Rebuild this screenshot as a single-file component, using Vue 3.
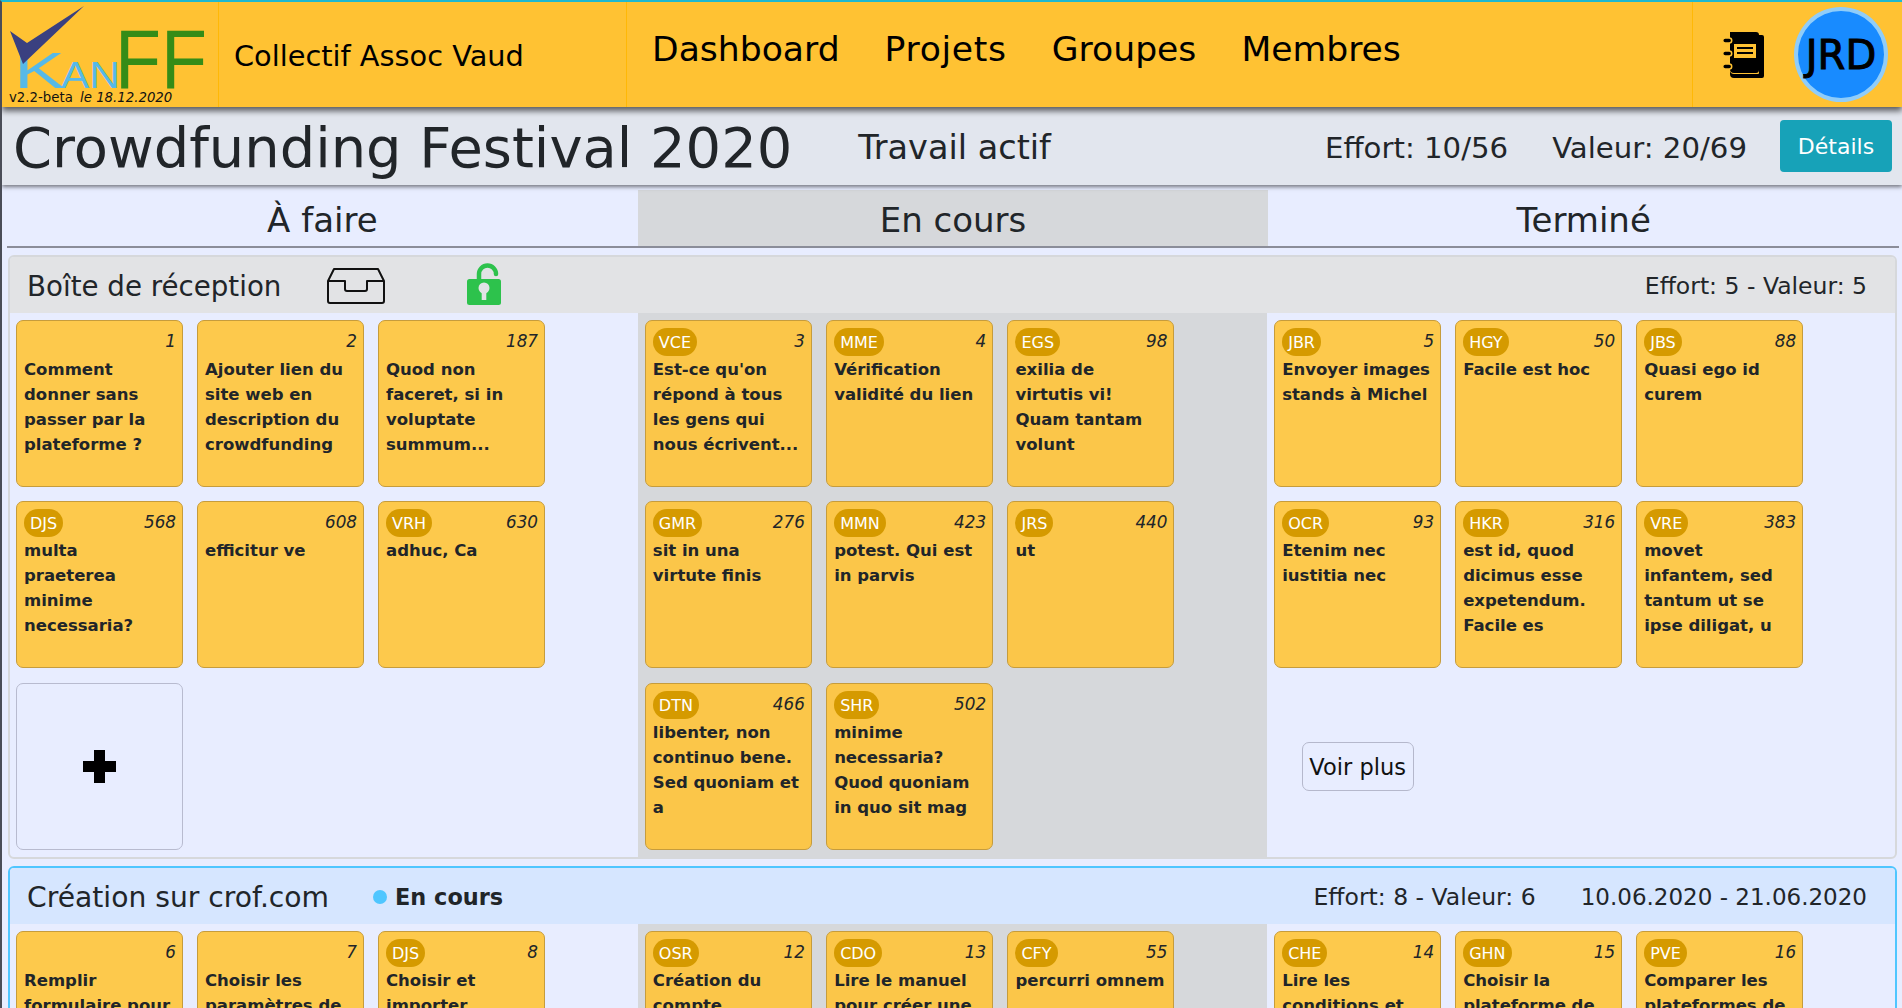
<script setup>
const sections = [
  {
    title: 'Boîte de réception', kind: 'is-inbox', stats: 'Effort: 5 - Valeur: 5',
    cols: [
      { cards: [
        { n: 1, t: 'Comment donner sans passer par la plateforme ?' },
        { n: 2, t: 'Ajouter lien du site web en description du crowdfunding' },
        { n: 187, t: 'Quod non faceret, si in voluptate summum...' },
        { b: 'DJS', n: 568, t: 'multa praeterea minime necessaria?' },
        { n: 608, t: 'efficitur ve' },
        { b: 'VRH', n: 630, t: 'adhuc, Ca' }
      ], add: true },
      { cards: [
        { b: 'VCE', n: 3, t: "Est-ce qu'on répond à tous les gens qui nous écrivent..." },
        { b: 'MME', n: 4, t: 'Vérification validité du lien' },
        { b: 'EGS', n: 98, t: 'exilia de virtutis vi! Quam tantam volunt' },
        { b: 'GMR', n: 276, t: 'sit in una virtute finis' },
        { b: 'MMN', n: 423, t: 'potest. Qui est in parvis' },
        { b: 'JRS', n: 440, t: 'ut' },
        { b: 'DTN', n: 466, t: 'libenter, non continuo bene. Sed quoniam et a' },
        { b: 'SHR', n: 502, t: 'minime necessaria? Quod quoniam in quo sit mag' }
      ] },
      { cards: [
        { b: 'JBR', n: 5, t: 'Envoyer images stands à Michel' },
        { b: 'HGY', n: 50, t: 'Facile est hoc' },
        { b: 'JBS', n: 88, t: 'Quasi ego id curem' },
        { b: 'OCR', n: 93, t: 'Etenim nec iustitia nec' },
        { b: 'HKR', n: 316, t: 'est id, quod dicimus esse expetendum. Facile es' },
        { b: 'VRE', n: 383, t: 'movet infantem, sed tantum ut se ipse diligat, u' }
      ], more: true }
    ]
  },
  {
    title: 'Création sur crof.com', kind: 'is-active', stats: 'Effort: 8 - Valeur: 6', dates: '10.06.2020 - 21.06.2020',
    cols: [
      { cards: [
        { n: 6, t: 'Remplir formulaire pour' },
        { n: 7, t: 'Choisir les paramètres de' },
        { b: 'DJS', n: 8, t: 'Choisir et importer' }
      ] },
      { cards: [
        { b: 'OSR', n: 12, t: 'Création du compte' },
        { b: 'CDO', n: 13, t: 'Lire le manuel pour créer une' },
        { b: 'CFY', n: 55, t: 'percurri omnem' }
      ] },
      { cards: [
        { b: 'CHE', n: 14, t: 'Lire les conditions et' },
        { b: 'GHN', n: 15, t: 'Choisir la plateforme de' },
        { b: 'PVE', n: 16, t: 'Comparer les plateformes de' }
      ] }
    ]
  }
]
</script>

<template>
  <div class="page">
    <header class="nav">
      <div class="logo">
        <svg width="216" height="105" viewBox="0 2 216 105">
          <text x="12" y="88" class="lg-k" textLength="51" lengthAdjust="spacingAndGlyphs">K</text>
          <text x="59" y="88" class="lg-an" textLength="59" lengthAdjust="spacingAndGlyphs">AN</text>
          <text x="113" y="88" class="lg-ff" textLength="92" lengthAdjust="spacingAndGlyphs">FF</text>
          <polygon points="8,31 25,43 82,6 21,64" fill="#3a4080" />
          <text x="7" y="102" class="lg-v">v2.2-beta <tspan class="lg-date" dx="3">le 18.12.2020</tspan></text>
        </svg>
      </div>
      <div class="org">Collectif Assoc Vaud</div>
      <nav class="links">
        <a>Dashboard</a><a class="wide">Projets</a><a>Groupes</a><a>Membres</a>
      </nav>
      <div class="user">
        <svg class="book" width="44" height="48" viewBox="0 0 44 48">
          <path d="M8 1h26a3 3 0 0 1 3 3v35a3 3 0 0 1-3 3H12a4 4 0 0 1-4-4z" fill="#000" />
          <path d="M37 4h3a2 2 0 0 1 2 2v39a2 2 0 0 1-2 2H12a4 4 0 0 1-4-4v-3a4 4 0 0 0 4 3h24a1 1 0 0 0 1-1z" fill="#000" />
          <rect x="12" y="13" width="22" height="14" fill="#ffc233" />
          <path d="M15 17h16M15 22h16" stroke="#000" stroke-width="2" />
          <g fill="#000" stroke="#ffc233" stroke-width="1.5">
            <rect x="0.7" y="7" width="9" height="5" rx="2.5" />
            <rect x="0.7" y="20" width="9" height="5" rx="2.5" />
            <rect x="0.7" y="33" width="9" height="5" rx="2.5" />
          </g>
        </svg>
        <div class="avatar">JRD</div>
      </div>
    </header>

    <div class="titlebar">
      <h1>Crowdfunding Festival 2020</h1>
      <div class="work">Travail actif</div>
      <div class="tstat first">Effort: 10/56</div>
      <div class="tstat">Valeur: 20/69</div>
      <button class="details">Détails</button>
    </div>

    <div class="heads">
      <div class="head">À faire</div>
      <div class="head mid">En cours</div>
      <div class="head">Terminé</div>
    </div>

    <section v-for="s in sections" :key="s.title" class="sec" :class="s.kind">
      <div class="sec-head">
        <span class="sec-title">{{ s.title }}</span>
        <template v-if="s.kind === 'is-inbox'">
          <svg class="tray" width="58" height="36" viewBox="0 0 58 36" fill="none" stroke="#111" stroke-width="2" stroke-linejoin="round">
            <path d="M1 13 7 1h44l6 12v20a2 2 0 0 1-2 2H3a2 2 0 0 1-2-2z" />
            <path d="M1 13h17v8a2 2 0 0 0 2 2h18a2 2 0 0 0 2-2v-8h17" />
          </svg>
          <svg class="lock" width="34" height="42" viewBox="0 0 34 42">
            <path d="M9 18v-7a8.500 8.500 0 0 1 17 0" fill="none" stroke="#2dc24c" stroke-width="4.500" stroke-linecap="round" transform="translate(3 0)" />
            <rect x="0" y="16" width="34" height="26" rx="2.500" fill="#2dc24c" />
            <circle cx="17" cy="25" r="5.500" fill="#e2e3e5" />
            <rect x="14.700" y="26" width="4.600" height="11" fill="#e2e3e5" />
          </svg>
        </template>
        <span v-else class="status"><i class="dot"></i>En cours</span>
        <span class="sec-stats">{{ s.stats }}</span>
        <span v-if="s.dates" class="sec-dates">{{ s.dates }}</span>
      </div>
      <div class="cols">
        <div v-for="(c, i) in s.cols" :key="i" class="col" :class="{ mid: i === 1, last: i === 2 }">
          <article v-for="k in c.cards" :key="k.n" class="card">
            <div class="card-top">
              <span v-if="k.b" class="badge">{{ k.b }}</span>
              <em class="num">{{ k.n }}</em>
            </div>
            <p class="card-title">{{ k.t }}</p>
          </article>
          <div v-if="c.add" class="add">
            <svg width="33" height="33" viewBox="0 0 33 33"><path d="M11 0h11v11h11v11H22v11H11V22H0V11h11z" fill="#000" /></svg>
          </div>
          <div v-if="c.more" class="more"><button class="more-btn">Voir plus</button></div>
        </div>
      </div>
    </section>
  </div>
</template>

<style>
html, body { margin: 0; height: 100%; overflow: hidden; background: #e8edff; }
</style>

<style scoped>
.page {
  height: 1008px;
  overflow: hidden;
  box-sizing: border-box;
  border-left: 2px solid #4a4d57;
  border-top: 2px solid #1fb8cf;
  font-family: "DejaVu Sans", sans-serif;
  color: #212529;
  background: #e8edff;
}
.nav {
  display: flex;
  height: 105px;
  background: #ffc233;
  box-shadow: 0 4px 6px rgba(0, 0, 0, .6);
  position: relative;
  z-index: 2;
  color: #000;
}
.logo { width: 216px; border-right: 1px solid #ffb806; flex: none; }
.logo svg { display: block; }
.lg-k { font: 400 50px "Liberation Sans", sans-serif; fill: #56b9e8; }
.lg-an { font: 400 36px "Liberation Sans", sans-serif; fill: #56b9e8; }
.lg-ff { font: 400 84px "Liberation Sans", sans-serif; fill: #358c17; }
.lg-v { font: 400 13.300px "DejaVu Sans", sans-serif; fill: #111; }
.lg-date { font-style: italic; }
.org {
  width: 408px;
  flex: none;
  box-sizing: border-box;
  padding: 34px 0 0 15px;
  font-size: 28.800px;
  border-right: 1px solid #ffb806;
  line-height: 40px;
}
.links {
  flex: 1;
  display: flex;
  gap: 45px;
  padding: 27px 0 0 25px;
  font-size: 34.600px;
  line-height: 40px;
}
.links .wide { letter-spacing: .7px; }
.user {
  flex: none;
  width: 210px;
  box-sizing: border-box;
  border-left: 1px solid #ffb806;
  display: flex;
  padding: 5px 0 0 29px;
}
.book { margin-top: 24px; }
.avatar {
  margin-left: 28px;
  width: 94px;
  height: 95px;
  box-sizing: border-box;
  border: 4px solid #90cdf9;
  border-radius: 50%;
  background: #188bff;
  display: flex;
  align-items: center;
  justify-content: center;
  font-size: 40px;
  -webkit-text-stroke: 1px #000;
}
.titlebar {
  display: flex;
  align-items: center;
  height: 78px;
  padding: 0 10px 0 11px;
  background: #e2e6ee;
  box-shadow: 0 2px 4px rgba(0, 0, 0, .5);
  position: relative;
  z-index: 1;
}
h1 { margin: 4px 0 0; font-size: 55.900px; font-weight: 400; line-height: 74px; white-space: nowrap; }
.work { margin-left: 66px; font-size: 33.500px; padding-top: 3px; }
.tstat { font-size: 29.200px; margin-left: 44px; padding-top: 3px; }
.tstat.first { margin-left: auto; }
.details {
  margin-left: 33px;
  width: 112px;
  height: 52px;
  border: 0;
  border-radius: 4px;
  background: #17a2b8;
  color: #fff;
  font: 400 22px "DejaVu Sans", sans-serif;
}
.heads {
  display: flex;
  margin: 5px 3px 0 5px;
  border-bottom: 2px solid #8b8d99;
}
.head {
  flex: 1;
  height: 56px;
  line-height: 60px;
  text-align: center;
  font-size: 34px;
}
.head.mid { background: #d6d8db; }
.sec {
  margin: 7px 5px 7px 6px;
  border: 2px solid #d6d8db;
  border-radius: 6px;
  overflow: hidden;
}
.sec.is-active { border-color: #4fc6ff; }
.sec-head {
  display: flex;
  align-items: center;
  box-sizing: border-box;
  height: 56px;
  padding: 2px 28px 0 17px;
  background: #e2e3e5;
  font-size: 23.500px;
}
.is-active .sec-head { background: #d6e6ff; }
.sec-title { font-size: 27.700px; }
.is-active .sec-title { font-size: 28.200px; }
.tray { margin-left: 46px; }
.lock { margin-left: 82px; margin-top: -5px; }
.status { margin-left: 44px; font-weight: 700; font-size: 22.400px; display: flex; align-items: center; }
.dot { width: 14px; height: 14px; border-radius: 50%; background: #4fc6ff; margin-right: 8px; }
.sec-stats { margin-left: auto; }
.sec-dates { margin-left: 45px; font-size: 23px; }
.cols { display: grid; grid-template-columns: repeat(3, 1fr); }
.col {
  display: grid;
  grid-template-columns: repeat(auto-fill, 167px);
  grid-auto-rows: 167px;
  column-gap: 14px;
  row-gap: 14.250px;
  padding: 7px 6px 7.500px 6px;
  align-content: start;
}
.col.mid { background: #d6d8db; padding-left: 6.500px; column-gap: 14.300px; }
.col.last { padding-left: 7.500px; }
.card {
  box-sizing: border-box;
  border: 1px solid #c69c3c;
  border-radius: 7px;
  background: rgba(255, 196, 56, .9);
  padding: 7px 6px 7px 7px;
}
.card-top {
  display: flex;
  align-items: center;
  justify-content: space-between;
  height: 28px;
}
.badge {
  background: #d59a00;
  color: #fff;
  border-radius: 14px;
  height: 28px;
  line-height: 30px;
  padding: 0 6px;
  font-size: 16px;
}
.num {
  margin-left: auto;
  margin-top: -2px;
  font-size: 16.800px;
  color: #212529;
}
.card-title {
  margin: 1px 0 0;
  padding-right: 1px;
  font-size: 16.500px;
  font-weight: 700;
  line-height: 25px;
}
.add {
  box-sizing: border-box;
  border: 1px solid #b8bbcf;
  border-radius: 7px;
  display: flex;
  align-items: center;
  justify-content: center;
}
.more { display: flex; align-items: center; justify-content: center; }
.more-btn {
  width: 112px;
  height: 49px;
  padding: 2px 0 0;
  background: transparent;
  border: 1px solid #b5b8cc;
  border-radius: 7px;
  font: 400 22.500px "DejaVu Sans", sans-serif;
  color: #111;
}
</style>
